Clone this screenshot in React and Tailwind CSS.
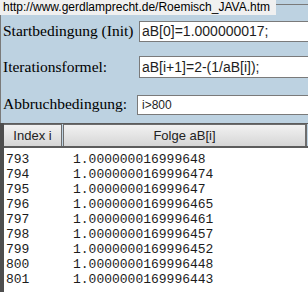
import React from 'react';

const rows = [
  ['793', '1.000000016999648'],
  ['794', '1.0000000169996474'],
  ['795', '1.000000016999647'],
  ['796', '1.0000000169996465'],
  ['797', '1.0000000169996461'],
  ['798', '1.0000000169996457'],
  ['799', '1.0000000169996452'],
  ['800', '1.0000000169996448'],
  ['801', '1.0000000169996443']
];

const serif = { fontFamily: '"Liberation Serif", "Times New Roman", serif' };

export default function App() {
  return (
    <div className="relative w-[308px] h-[292px] overflow-hidden bg-[#bdd2e1] pt-[4px]">
      {/* Tooltip with the page url */}
      <div
        className="absolute top-0 left-0 z-10 h-[15px] w-[276px] bg-[#f0f0f0] pl-[3px] text-[12px] leading-[15px] text-black whitespace-nowrap"
        style={{ fontFamily: '"Liberation Sans", Arial, sans-serif' }}
      >
        http://www.gerdlamprecht.de/Roemisch_JAVA.htm
      </div>

      <div className="h-[288px] border-t border-l border-[#7a7a7a] flex flex-col">
        {/* Form rows */}
        <div className="flex items-start mt-[16px]">
          <span className="w-[138px] shrink-0 whitespace-nowrap pl-[2px] text-[15.5px] leading-[20px] text-black" style={serif}>
            Startbedingung (Init)
          </span>
          <div className="h-[21px] w-[200px] shrink-0 whitespace-nowrap border border-[#7a7a7a] bg-white pl-[2px] text-[14px] leading-[19px] text-[#1e1e1e] font-['Liberation_Sans',Arial,sans-serif]">
            aB[0]=1.000000017;
          </div>
        </div>

        <div className="flex items-start mt-[14px]">
          <span className="w-[138px] shrink-0 whitespace-nowrap pl-[2px] text-[15.5px] leading-[22px] text-black" style={serif}>
            Iterationsformel:
          </span>
          <div className="h-[22px] w-[200px] shrink-0 whitespace-nowrap border border-[#7a7a7a] bg-white pl-[2px] text-[14px] leading-[20px] text-[#1e1e1e] font-['Liberation_Sans',Arial,sans-serif]">
            aB[i+1]=2-(1/aB[i]);
          </div>
        </div>

        <div className="flex items-start mt-[17px]">
          <span className="w-[136px] shrink-0 whitespace-nowrap pl-[2px] pt-[1px] text-[15.5px] leading-[15px] text-black" style={serif}>
            Abbruchbedingung:
          </span>
          <div className="h-[20px] w-[200px] shrink-0 whitespace-nowrap border border-[#7a7a7a] bg-white pl-[4px] text-[12px] leading-[18px] text-[#1e1e1e] font-['Liberation_Sans',Arial,sans-serif]">
            i&gt;800
          </div>
        </div>

        {/* Result table */}
        <div className="mt-[8px] -ml-px flex-1 flex flex-col border-l-[4px] border-[#4e4e4e]">
          <div className="flex h-[25px] border-t border-b-2 border-[#5c5c5c] bg-[#bdd2e1] font-['Liberation_Sans',Arial,sans-serif] text-[13px] text-[#222]">
            <div className="w-[58px] flex items-center justify-center border-r border-t border-[#6d6d6d] bg-gradient-to-b from-[#f2f2f2] to-[#d6d6d6]">
              Index i
            </div>
            <div className="w-[1px]" />
            <div className="w-[244px] flex items-center justify-center border-l border-r-2 border-t border-[#6d6d6d] bg-gradient-to-b from-[#f2f2f2] to-[#d6d6d6]">
              Folge aB[i]
            </div>
          </div>
          <div className="flex-1 bg-white pt-[4px] pl-[2px] font-['Liberation_Mono','Courier_New',monospace] text-[13px] leading-[15px] text-[#1c1c1c]">
            {rows.map(([i, v]) => (
              <div key={i} className="flex">
                <span className="w-[67px]">{i}</span>
                <span>{v}</span>
              </div>
            ))}
          </div>
        </div>
      </div>
    </div>
  );
}
